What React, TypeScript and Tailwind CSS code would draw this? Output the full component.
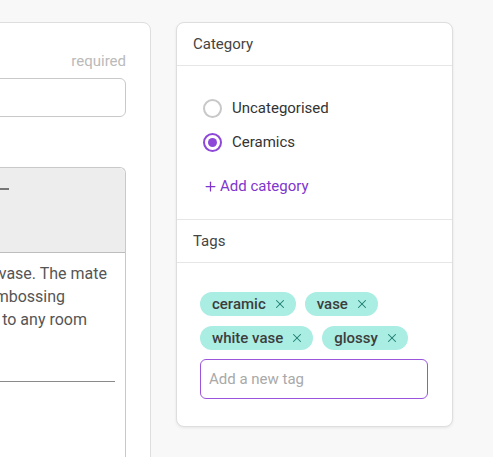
import { Plus, X } from "lucide-react";

const TAGS_ROW1 = ["ceramic", "vase"];
const TAGS_ROW2 = ["white vase", "glossy"];

// description lines, each ends where the wrap falls in the editor
const DESC_LINES = [
  { text: "A curious looking white vase. The mate", pr: "pr-[18px]" },
  { text: "rial has a subtle embossing", pr: "pr-[60px]" },
  { text: "that adds character to any room", pr: "pr-[38px]" },
];

function Tag({ label }: { label: string }) {
  return (
    <span className="inline-flex items-center h-6 rounded-full bg-[#aaede3] pl-3 pr-[9px] gap-[7px] text-[15px] text-[#3d3d3d] font-medium">
      {label}
      <X className="w-[14px] h-[14px] text-[#1d7d70]" strokeWidth={1.75} />
    </span>
  );
}

export default function App() {
  return (
    <div
      className="w-[493px] h-[457px] bg-[#f8f8f8] overflow-hidden flex gap-[25px] pt-[22px]"
      style={{ fontFamily: "Roboto, 'Noto Sans', Arial, sans-serif" }}
    >
      {/* Left card (product details, cut off) */}
      <div className="-ml-[250px] w-[401px] h-[460px] shrink-0 bg-white border border-[#dedede] rounded-lg pr-[24px] pl-[20px] flex flex-col">
        <div className="mt-[28px] text-right text-[15px] text-[#bababa] leading-5">required</div>
        <div className="mt-[7px] h-[39px] border border-[#c9c9c9] rounded-md" />
        <div className="mt-[50px] flex-1 border border-[#c9c9c9] border-b-0 rounded-t-md flex flex-col">
          <div className="h-[85px] bg-[#ededed] border-b border-[#bdbdbd] rounded-t-md relative">
            <div className="absolute right-[116px] top-[20px] w-[10px] h-[2px] bg-[#777]" />
          </div>
          <div className="pt-[9px] text-[16px] leading-[23px] text-[#555]">
            {DESC_LINES.map((l) => (
              <div key={l.text} className={`text-right whitespace-nowrap ${l.pr}`}>
                {l.text}
              </div>
            ))}
          </div>
          <div className="mt-[50px] mr-[10px] h-px bg-[#8a8a8a]" />
        </div>
      </div>

      {/* Right card */}
      <div className="w-[277px] h-[405px] shrink-0 bg-white border border-[#dedede] rounded-lg shadow-[0_1px_3px_rgba(0,0,0,0.08)] flex flex-col">
        <div className="h-[43px] px-4 flex items-center text-[15px] text-[#444] border-b border-[#e6e6e6]">
          Category
        </div>
        <div className="h-[154px] pl-[26px] pt-[32px] border-b border-[#e6e6e6] flex flex-col">
          <label className="flex items-center gap-[10px] h-[21px] text-[15px] text-[#333]">
            <span className="w-[19px] h-[19px] rounded-full border-2 border-[#c8c8c8] bg-white" />
            Uncategorised
          </label>
          <label className="mt-[13px] flex items-center gap-[10px] h-[21px] text-[15px] text-[#333]">
            <span className="w-[19px] h-[19px] rounded-full border-2 border-[#8d48d8] flex items-center justify-center">
              <span className="w-[9px] h-[9px] rounded-full bg-[#8d48d8]" />
            </span>
            Ceramics
          </label>
          <button className="mt-[22px] self-start flex items-center gap-[2px] text-[15px] text-[#7e36cc]">
            <Plus className="w-[15px] h-[15px]" strokeWidth={2} />
            Add category
          </button>
        </div>
        <div className="h-[43px] px-4 flex items-center text-[15px] text-[#444] border-b border-[#e6e6e6]">
          Tags
        </div>
        <div className="pl-[23px] pr-[24px] pt-[29px] flex flex-col">
          <div className="flex gap-[9px]">
            {TAGS_ROW1.map((t) => (
              <Tag key={t} label={t} />
            ))}
          </div>
          <div className="flex gap-[9px] mt-[10px]">
            {TAGS_ROW2.map((t) => (
              <Tag key={t} label={t} />
            ))}
          </div>
          <input
            placeholder="Add a new tag"
            className="mt-[9px] h-[40px] w-full rounded-md border border-[#9a55dc] px-[8px] text-[15px] text-[#333] placeholder:text-[#a9a9a9] outline-none"
          />
        </div>
      </div>
    </div>
  );
}
